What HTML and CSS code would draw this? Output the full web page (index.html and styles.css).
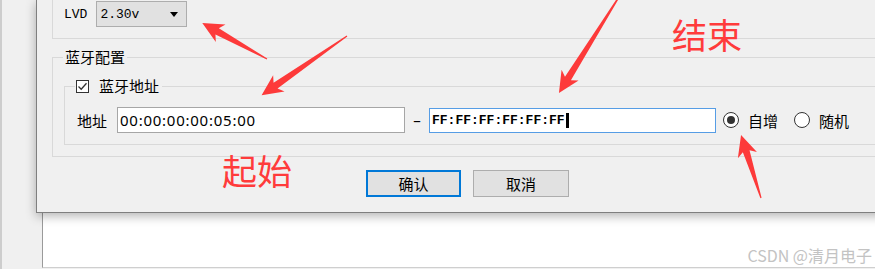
FILE: index.html
```html
<!DOCTYPE html>
<html lang="zh-CN">
<head>
    <meta charset="UTF-8">
    <title>蓝牙配置</title>
    <link rel="stylesheet" href="styles.css">
</head>
<body>
    <div class="screen">
        <!-- 背后的主窗口 -->
        <div class="backdrop">
            <div class="strip"></div>
            <div class="panel"></div>
        </div>

        <!-- 配置对话框 -->
        <div class="dialog">
            <div class="group-prev">
                <div class="lvd-row">
                    <span class="lvd-label">LVD</span>
                    <div class="combo">
                        <span>2.30v</span>
                        <span class="combo-arrow"></span>
                    </div>
                </div>
            </div>

            <fieldset class="group bt-group">
                <legend>蓝牙配置</legend>
                <fieldset class="group addr-group">
                    <legend>
                        <span class="check">
                            <svg width="13" height="13" viewBox="0 0 13 13"><path d="M2.5 6.5 L5.2 9.2 L10.5 3.2" fill="none" stroke="#333" stroke-width="1.3"/></svg>
                        </span>蓝牙地址
                    </legend>
                    <div class="addr-row">
                        <span class="addr-label">地址</span>
                        <div class="field">00:00:00:00:05:00</div>
                        <span class="dash">–</span>
                        <div class="field field-focus mono">FF:FF:FF:FF:FF:FF<span class="caret"></span></div>
                        <div class="radios">
                            <span class="radio on"></span><span class="radio-text">自增</span>
                            <span class="radio"></span><span class="radio-text">随机</span>
                        </div>
                    </div>
                </fieldset>
            </fieldset>

            <div class="buttons">
                <button class="btn btn-default">确认</button>
                <button class="btn">取消</button>
            </div>
        </div>

        <!-- 标注 -->
        <svg class="marks" width="875" height="269" viewBox="0 0 875 269">
            <g fill="#fd3a3a">
                <g transform="translate(267 59) rotate(209)">
                    <polygon points="0,-0.6 57,-3.5 53,-10 74,0 53,10 57,3.5 0,0.6"/>
                </g>
                <g transform="translate(347 36) rotate(145.2)">
                    <polygon points="0,-0.6 87,-3.5 83,-10 104,0 83,10 87,3.5 0,0.6"/>
                </g>
                <g transform="translate(622 -8) rotate(122)">
                    <polygon points="0,-0.6 102,-3.5 98,-10 119,0 98,10 102,3.5 0,0.6"/>
                </g>
                <g transform="translate(761 198) rotate(-107.6)">
                    <polygon points="0,-0.6 49,-3.5 45,-10 66,0 45,10 49,3.5 0,0.6"/>
                </g>
            </g>
        </svg>
        <span class="note note-end">结束</span>
        <span class="note note-start">起始</span>
        <span class="watermark">CSDN @清月电子</span>
    </div>
</body>
</html>
```

FILE: styles.css
```css
* {
    box-sizing: border-box;
}

body {
    margin: 0;
    background-color: #f0f0f0;
    font-family: "Noto Sans", "Noto Sans CJK SC", sans-serif;
    color: #000;
}

.screen {
    position: relative;
    width: 875px;
    height: 269px;
    overflow: hidden;
}

/* 背后的窗口 */
.backdrop {
    display: flex;
    height: 269px;
}

.strip {
    width: 42px;
    border-left: 2px solid #cdcdcd;
    background-color: #f0f0f0;
}

.panel {
    flex: 1;
    height: 268px;
    background-color: #fff;
    border-left: 1px solid #9a9a9a;
    border-bottom: 1px solid #cfcfcf;
}

/* 对话框 */
.dialog {
    position: absolute;
    left: 36px;
    top: 0;
    width: 860px;
    height: 213px;
    background-color: #f0f0f0;
    border-left: 1px solid #7f7f7f;
    border-bottom: 1px solid #7f7f7f;
    box-shadow: 0 3px 10px rgba(0, 0, 0, 0.3);
}

.group-prev {
    width: 840px;
    margin: -12px 0 0 15px;
    padding: 12px 0 11px 11px;
    border: 1px solid #d9d9d9;
}

.lvd-row {
    display: flex;
    align-items: center;
    gap: 9px;
    height: 26px;
}

.lvd-label,
.mono,
.combo {
    font-family: "Liberation Mono", monospace;
    font-size: 13px;
}

.combo {
    display: flex;
    align-items: center;
    justify-content: space-between;
    width: 91px;
    height: 26px;
    padding: 0 8px 0 3px;
    background-color: #e1e1e1;
    border: 1px solid #adadad;
}

.combo-arrow {
    width: 0;
    height: 0;
    border-top: 5px solid #000;
    border-left: 4px solid transparent;
    border-right: 4px solid transparent;
}

/* 分组框 */
.group {
    margin: 0;
    border: 1px solid #d9d9d9;
    font-family: "Noto Sans CJK SC", sans-serif;
    font-size: 15px;
}

.group legend {
    line-height: 18px;
    padding: 0 2px;
}

.bt-group {
    width: 840px;
    margin: 9px 0 0 15px;
    padding: 0 0 11px 10px;
}

.addr-group {
    width: 804px;
    margin: 11px 0 0 1px;
    padding: 12px 10px 11px 10px;
}

.addr-group legend {
    display: flex;
    align-items: center;
    padding: 0 3px 0 1px;
}

.check {
    display: inline-block;
    width: 13px;
    height: 13px;
    margin-right: 10px;
    background-color: #fff;
    border: 1px solid #333;
    line-height: 0;
}

.check svg {
    margin: -1px 0 0 -1px;
}

.addr-row {
    display: flex;
    align-items: center;
    height: 26px;
    white-space: nowrap;
}

.addr-row > *,
.radios > * {
    flex-shrink: 0;
}

.addr-label {
    width: 30px;
    margin: 0 10px 0 2px;
}

.field {
    display: flex;
    align-items: center;
    width: 288px;
    height: 26px;
    padding: 0 2px;
    background-color: #fff;
    border: 1px solid #a6a6a6;
    font-family: "Noto Sans", sans-serif;
    font-size: 15px;
    letter-spacing: 0.75px;
}

.field-focus {
    width: 287px;
    height: 25px;
    border-color: #569de5;
    font-family: "Liberation Mono", monospace;
    font-size: 13px;
    font-weight: bold;
    letter-spacing: 0;
}

.caret {
    display: inline-block;
    width: 3px;
    height: 15px;
    margin-left: 1px;
    background-color: #000;
}

.dash {
    width: 24px;
    text-align: center;
    font-family: "Noto Sans", sans-serif;
}

.radios {
    display: flex;
    align-items: center;
    margin-left: 7px;
}

.radio {
    position: relative;
    width: 16px;
    height: 16px;
    border: 1px solid #333;
    border-radius: 50%;
    background-color: #fff;
}

.radio.on::after {
    content: "";
    position: absolute;
    left: 3px;
    top: 3px;
    width: 8px;
    height: 8px;
    border-radius: 50%;
    background-color: #333;
}

.radio-text {
    margin: 0 16px 0 9px;
}

/* 按钮 */
.buttons {
    display: flex;
    gap: 12px;
    margin: 13px 0 0 329px;
}

.btn {
    width: 96px;
    height: 27px;
    padding: 0;
    background-color: #e1e1e1;
    border: 1px solid #adadad;
    font-family: "Noto Sans CJK SC", sans-serif;
    font-size: 15px;
    color: #000;
}

.btn-default {
    width: 95px;
    border: 2px solid #0078d7;
}

/* 标注 */
.marks {
    position: absolute;
    left: 0;
    top: 0;
    pointer-events: none;
}

.note {
    position: absolute;
    font-family: "Noto Sans CJK SC", sans-serif;
    font-size: 35px;
    line-height: 1;
    color: #ff3b3b;
}

.note-end {
    left: 672px;
    top: 16px;
}

.note-start {
    left: 222px;
    top: 152px;
}

.watermark {
    position: absolute;
    right: 3px;
    top: 243px;
    font-family: "Noto Sans CJK SC", sans-serif;
    font-size: 16px;
    color: #c3c3c3;
}
```
